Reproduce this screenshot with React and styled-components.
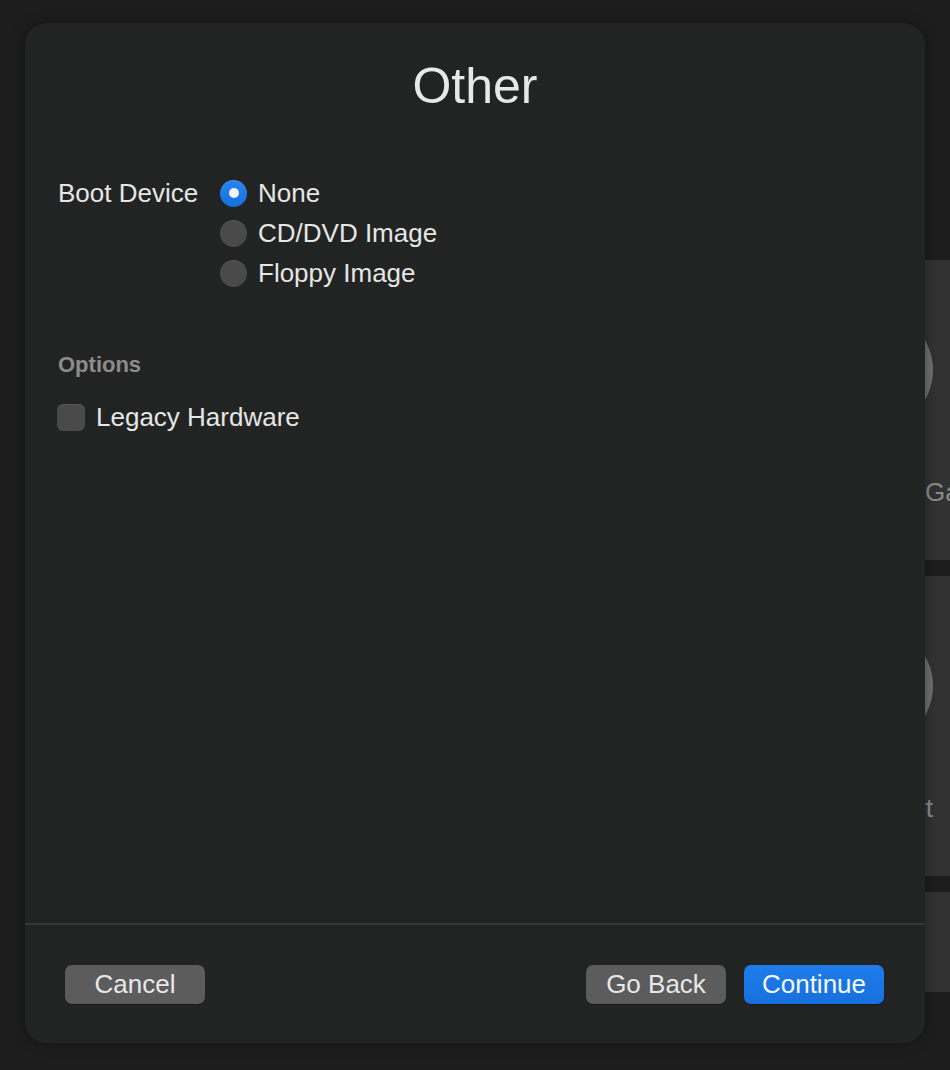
import React from "react";
import styled, { createGlobalStyle } from "styled-components";

const GlobalStyle = createGlobalStyle`
  html, body {
    margin: 0;
    padding: 0;
    background: #1d1d1d;
    font-family: "Liberation Sans", Arial, sans-serif;
    color: #e6e6e6;
  }
`;

const Page = styled.div`
  position: relative;
  width: 950px;
  height: 1070px;
  overflow: hidden;
  background: #1d1d1d;
`;

/* window behind the sheet: only its right edge peeks out */
const BackWindow = styled.div`
  display: flex;
  flex-direction: column;
  gap: 16px;
  padding: 260px 0 0 700px;
`;

const Card = styled.div`
  width: 400px;
  height: ${(props) => props.height || "300px"};
  background: #323232;
  display: flex;
  flex-direction: column;
  padding-top: 50px;
  box-sizing: border-box;
`;

const CardIcon = styled.div`
  width: 120px;
  height: 120px;
  border-radius: 50%;
  background: #6f6f6f;
  margin-left: 113px;
`;

const CardLabel = styled.div`
  width: ${(props) => props.width};
  margin-top: 47px;
  padding-left: ${(props) => props.pad || "0"};
  text-align: ${(props) => props.align || "left"};
  font-size: 26px;
  line-height: 30px;
  color: #8a8a8a;
  white-space: nowrap;
`;

const Sheet = styled.div`
  position: absolute;
  left: 25px;
  top: 23px;
  width: 900px;
  height: 1020px;
  border-radius: 22px;
  background: #222423;
  box-shadow: 0 0 14px rgba(0, 0, 0, 0.35);
  display: flex;
  flex-direction: column;
  overflow: hidden;
`;

const Title = styled.h1`
  margin: 33px 0 0;
  font-size: 50px;
  line-height: 60px;
  font-weight: 400;
  text-align: center;
  color: #e8e8e8;
`;

const Body = styled.div`
  flex: 1;
  padding: 57px 33px 0;
  display: flex;
  flex-direction: column;
`;

const FieldRow = styled.div`
  display: flex;
  align-items: flex-start;
  gap: 18px;
`;

const FieldLabel = styled.div`
  min-width: 144px;
  font-size: 26px;
  line-height: 40px;
  color: #e6e6e6;
`;

const RadioGroup = styled.div`
  display: flex;
  flex-direction: column;
`;

const Choice = styled.label`
  display: flex;
  align-items: center;
  gap: 11px;
  height: 40px;
  font-size: 26px;
  color: #e6e6e6;
`;

const RadioDot = styled.span`
  width: 27px;
  height: 27px;
  border-radius: 50%;
  box-sizing: border-box;
  display: flex;
  align-items: center;
  justify-content: center;
  background: ${(props) =>
    props.checked ? "linear-gradient(#2a84f0, #166fdc)" : "#4a4a4a"};
  box-shadow: inset 0 1px 0 rgba(255, 255, 255, 0.08);
  &::after {
    content: "";
    display: ${(props) => (props.checked ? "block" : "none")};
    width: 10px;
    height: 10px;
    border-radius: 50%;
    background: #f2f4f8;
  }
`;

const SectionHeader = styled.div`
  margin-top: 58px;
  font-size: 22px;
  line-height: 28px;
  font-weight: 700;
  color: #8c8c8c;
`;

const CheckRow = styled(Choice)`
  margin-top: 18px;
  margin-left: -1px;
`;

const CheckBox = styled.span`
  width: 28px;
  height: 27px;
  border-radius: 6px;
  background: #4a4a4a;
  box-shadow: inset 0 1px 0 rgba(255, 255, 255, 0.08);
`;

const Footer = styled.div`
  border-top: 2px solid #353636;
  height: 120px;
  padding: 40px 41px 0 40px;
  box-sizing: border-box;
  display: flex;
  align-items: flex-start;
  justify-content: space-between;
`;

const ButtonGroup = styled.div`
  display: flex;
  gap: 18px;
`;

const Button = styled.button`
  width: 140px;
  height: 39px;
  border: none;
  border-radius: 7px;
  padding: 0;
  font-family: inherit;
  font-size: 26px;
  line-height: 39px;
  color: ${(props) => (props.primary ? "#f4f7fc" : "#e8e8e8")};
  background: ${(props) =>
    props.primary ? "linear-gradient(#1f7ceb, #1770dc)" : "#5c5c5c"};
  box-shadow: 0 1px 1px rgba(0, 0, 0, 0.3);
`;

const bootOptions = [
  { label: "None", checked: true },
  { label: "CD/DVD Image" },
  { label: "Floppy Image" },
];

export default function App() {
  return (
    <Page>
      <GlobalStyle />
      <BackWindow>
        <Card>
          <CardIcon />
          <CardLabel pad="225px">Gallery</CardLabel>
        </Card>
        <Card>
          <CardIcon />
          <CardLabel width="233px" align="right">
            Import
          </CardLabel>
        </Card>
        <Card height="100px" />
      </BackWindow>

      <Sheet>
        <Title>Other</Title>
        <Body>
          <FieldRow>
            <FieldLabel>Boot Device</FieldLabel>
            <RadioGroup>
              {bootOptions.map((o) => (
                <Choice key={o.label}>
                  <RadioDot checked={o.checked} />
                  {o.label}
                </Choice>
              ))}
            </RadioGroup>
          </FieldRow>
          <SectionHeader>Options</SectionHeader>
          <CheckRow>
            <CheckBox />
            Legacy Hardware
          </CheckRow>
        </Body>
        <Footer>
          <Button>Cancel</Button>
          <ButtonGroup>
            <Button>Go Back</Button>
            <Button primary>Continue</Button>
          </ButtonGroup>
        </Footer>
      </Sheet>
    </Page>
  );
}
